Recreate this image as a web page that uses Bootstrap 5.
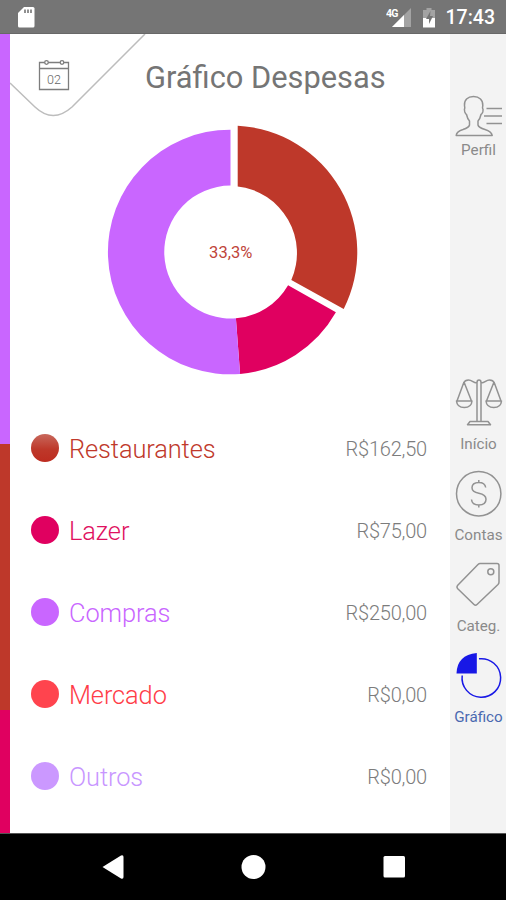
<!DOCTYPE html>
<html lang="pt-BR">
<head>
<meta charset="utf-8">
<meta name="viewport" content="width=device-width, initial-scale=1">
<title>Gráfico Despesas</title>
<link rel="stylesheet" href="https://cdn.jsdelivr.net/npm/bootstrap@5.3.0/dist/css/bootstrap.min.css">
<style>
body{font-family:Roboto,"Liberation Sans",sans-serif;color:#757575;line-height:1}
svg{display:block;flex:none}
.phone{width:506px;height:900px}
.status{height:34px;background:#757575;border-bottom:1px solid #686868;padding:0 11px 0 18px}
.clock{font-size:19.5px;font-weight:500;margin-left:10px;padding-top:2px}
.strip{width:10px}
.s-compras{height:409.5px;background:#c966ff}
.s-rest{height:266.5px;background:#be382a}
.s-lazer{background:#e00060}
.head{height:84px}
.title{font-size:30.8px;padding-top:4px;margin-left:-1px;white-space:nowrap;font-weight:400}
.entry{height:82px;padding:0 23px 0 21px}
.dot{width:28px;height:28px;margin-right:10px}
.cat{font-size:25.4px;font-weight:300;padding-top:3px;letter-spacing:-.1px}
.val{font-size:20px;font-weight:300;padding-top:2px;letter-spacing:-.2px;color:#7c7c7c}
.side{width:56px;background:#f3f3f3;font-size:15.2px;padding-top:61px}
.side a{color:#8a8a8a;text-decoration:none;height:91px;white-space:nowrap}
.side a.active{color:#4a69b0}
.side .first{height:284px}
.lbl{width:56px;text-align:center;padding-top:1px;padding-left:1px}
.keys{height:67px;background:#000;border-top:1px solid #555}
.c-rest{color:#c0392b}.c-lazer{color:#e0115f}.c-compras{color:#c966ff}.c-mercado{color:#ff3c48}.c-outros{color:#c896ff}
.bg-rest{background:linear-gradient(#c8685c,#be382a 55%,#bd2c20)}.bg-lazer{background:#e00060}.bg-compras{background:#c966ff}.bg-mercado{background:#ff444e}.bg-outros{background:#cb98ff}
</style>
<script src="https://cdn.jsdelivr.net/npm/bootstrap@5.3.0/dist/js/bootstrap.bundle.min.js"></script>
</head>
<body class="bg-white overflow-hidden">
<div class="phone d-flex flex-column overflow-hidden">
  <header class="status d-flex align-items-center justify-content-between text-white">
    <svg width="17" height="22" viewBox="0 0 17 22"><path d="M6 1h9q1.500 0 1.500 1.500V20q0 1.500-1.500 1.500H1.500Q0 21.500 0 20V7z" fill="#fff"/><path d="M7 3.500V7M10 3.500V7M13 3.500V7" stroke="#757575" stroke-width="1.600"/></svg>
    <div class="d-flex align-items-center">
      <svg width="50" height="24" viewBox="0 0 50 24"><path d="M25 3v19H6z" fill="#a3a3a3"/><path d="M18 10v12H6z" fill="#fff"/><text x="0" y="11.500" font-size="10.500" font-weight="700" letter-spacing="-.8" fill="#fff">4G</text><path d="M37 5h3.500V3h5v2H49v8H37z" fill="#a3a3a3"/><path d="M37 13h12v9.500H37z" fill="#fff"/><path d="M44.500 6l-4.500 8h3v5l4-8h-3z" fill="#757575"/></svg>
      <span class="clock">17:43</span>
    </div>
  </header>

  <div class="d-flex flex-grow-1">
    <div class="strip d-flex flex-column"><div class="s-compras"></div><div class="s-rest"></div><div class="s-lazer flex-grow-1"></div></div>

    <main class="flex-grow-1 bg-white">
      <div class="head d-flex align-items-center">
        <svg width="136" height="84" viewBox="0 0 136 84" fill="none">
          <path d="M0 49L25 73Q43 90 62 73L135 0" stroke="#bdbdbd" stroke-width="1.500"/>
          <g stroke="#7d7d7d" stroke-width="1.300"><path d="M29.500 28.500h29v27h-29zM29.500 34.500h29"/><circle cx="36.500" cy="28.500" r="1.800" fill="#fff"/><circle cx="52" cy="28.500" r="1.800" fill="#fff"/></g>
          <text x="44" y="50" text-anchor="middle" font-size="12.500" font-weight="300" fill="#666">02</text>
        </svg>
        <h1 class="title mb-0">Gráfico Despesas</h1>
      </div>
      <svg width="440" height="289" viewBox="10 118 440 289">
        <path d="M237.700 125.700A126.500 126.500 0 0 1 343.700 309L291.300 280A67 67 0 0 0 237.700 186.500z" fill="#be382a"/>
        <path d="M335.900 312.300A122.300 122.300 0 0 1 240.100 373.900L235.900 318.300A66.500 66.500 0 0 0 288.100 285.200z" fill="#e00060"/>
        <path d="M240.100 373.900A122.300 122.300 0 1 1 230.500 129.700V185.500A66.500 66.500 0 1 0 235.900 318.300z" fill="#c966ff"/>
        <text x="230.700" y="258" text-anchor="middle" font-size="16.500" fill="#c0453a">33,3%</text>
      </svg>
      <div class="entry d-flex align-items-center"><span class="dot rounded-circle bg-rest"></span><span class="cat c-rest">Restaurantes</span><span class="val ms-auto">R$162,50</span></div>
      <div class="entry d-flex align-items-center"><span class="dot rounded-circle bg-lazer"></span><span class="cat c-lazer">Lazer</span><span class="val ms-auto">R$75,00</span></div>
      <div class="entry d-flex align-items-center"><span class="dot rounded-circle bg-compras"></span><span class="cat c-compras">Compras</span><span class="val ms-auto">R$250,00</span></div>
      <div class="entry d-flex align-items-center"><span class="dot rounded-circle bg-mercado"></span><span class="cat c-mercado">Mercado</span><span class="val ms-auto">R$0,00</span></div>
      <div class="entry d-flex align-items-center"><span class="dot rounded-circle bg-outros"></span><span class="cat c-outros">Outros</span><span class="val ms-auto">R$0,00</span></div>
    </main>

    <nav class="side d-flex flex-column flex-shrink-0">
      <a href="#" class="first d-flex flex-column align-items-center">
        <svg width="56" height="47" viewBox="450 95 56 47" fill="none" stroke="#929292" stroke-width="1.500" stroke-linejoin="round"><path d="M473.500 96.500C467.500 96.500 464 100 464.500 105.500L464.800 108Q464 109 464.800 112Q465.500 114 466.500 114.500Q467.500 119 469.500 121V125Q469 127.500 463 129.500Q456.500 131.500 456.200 135.500H492.200Q491.500 131.500 485 129.500Q478.500 127.500 478 125V121Q480 119 481 114.500Q482 114 482.800 112Q483.500 109 482.500 108L482.800 105.500C483 100 479.500 96.500 473.500 96.500zM486.500 108.500H502M484 116H502M486.500 123.500H502"/></svg>
        <span class="lbl">Perfil</span>
      </a>
      <a href="#" class="d-flex flex-column align-items-center">
        <svg width="56" height="57" viewBox="450 379 56 57" fill="none" stroke="#929292" stroke-width="1.500" stroke-linejoin="round"><path d="M477 421V382.500Q477 380 479 380T481 382.500V421M477 383C472.500 383 472.500 380 468.500 380Q465 380 463.500 383M481 383C485.500 383 485.500 380 489.500 380Q493 380 494.500 383M463.800 382.500L457 401M464.200 382.500L471.500 401M493.800 382.500L486.500 401M494.200 382.500L501 401M456.500 401H472Q471.500 407.500 464.300 407.500T456.500 401zM486 401H501.500Q501 407.500 493.800 407.500T486 401zM470 421.500H488L490.500 424.800H467.500z"/></svg>
        <span class="lbl">Início</span>
      </a>
      <a href="#" class="d-flex flex-column align-items-center">
        <svg width="56" height="57" viewBox="450 470 56 57" fill="none" stroke="#929292" stroke-width="1.500"><circle cx="478.700" cy="493.700" r="22.200"/><path d="M485.700 487.500Q485 482.500 478.800 482.500Q472 482.500 472 487.800Q472 492 478.800 493.300Q486 494.700 486 499.300Q486 505 478.800 505Q472 505 471.500 499.500M478.800 480V482.500M478.800 505V507.500"/></svg>
        <span class="lbl">Contas</span>
      </a>
      <a href="#" class="d-flex flex-column align-items-center">
        <svg width="56" height="57" viewBox="450 561 56 57" fill="none" stroke="#929292" stroke-width="1.500" stroke-linejoin="round"><path d="M480 563.500H497Q499 563.500 499 565.500V582Q499 583.500 498 584.500L477 604.500Q475.500 606 474 604.500L457.500 588.500Q456.300 587 457.500 585.500L478 564.500Q479 563.500 480 563.500z"/><circle cx="490.800" cy="571.800" r="3"/></svg>
        <span class="lbl">Categ.</span>
      </a>
      <a href="#" class="active d-flex flex-column align-items-center">
        <svg width="56" height="57" viewBox="450 652 56 57"><path d="M476.800 653V673.500H456.500Q457 655 476.800 653z" fill="#1818e6"/><path d="M479 658.800A19.300 19.300 0 1 1 462.200 675.500" fill="none" stroke="#1818e6" stroke-width="1.500"/></svg>
        <span class="lbl">Gráfico</span>
      </a>
    </nav>
  </div>

  <footer class="keys flex-shrink-0">
    <svg width="506" height="66" viewBox="0 834 506 66" fill="#fff"><path d="M102.500 867L121 855.500Q123.500 854.500 123.500 857V877Q123.500 879.500 121 878.500z"/><circle cx="253.500" cy="867" r="12"/><rect x="383.500" y="856" width="21.500" height="21.500" rx="1.500"/></svg>
  </footer>
</div>
</body>
</html>
